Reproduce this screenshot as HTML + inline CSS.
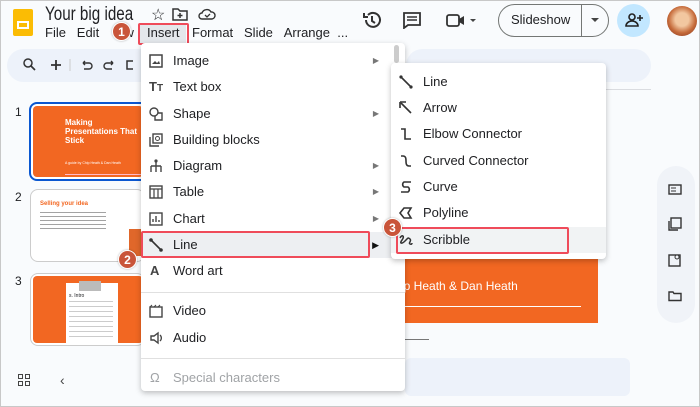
<!DOCTYPE html>
<html><head><style>
*{box-sizing:border-box;margin:0;padding:0}
body{width:700px;height:407px;overflow:hidden;background:#f9fbfd;font-family:"Liberation Sans",Roboto,sans-serif;color:#202124;position:relative;border:1px solid #c8c8c8}
.a{position:absolute}
.menu{background:#fff;border-radius:4px;box-shadow:0 2px 6px rgba(0,0,0,.25)}
.it{position:absolute;left:0;right:0;height:26px;font-size:13px;line-height:26px}
.it span.t{position:absolute;left:32px}
.it svg{position:absolute;left:8px;top:6px}
.arr{position:absolute;right:26px;font-size:8px;color:#777}
.badge{position:absolute;width:19px;height:19px;border-radius:50%;background:#c9553a;color:#fff;font-size:12px;font-weight:bold;text-align:center;line-height:19px;border:1.5px solid #fff;box-shadow:0 0 2px rgba(0,0,0,.3)}
.red{position:absolute;border:2.5px solid #ef4b5a;border-radius:2px}
</style></head><body>
<div class="a" style="left:12px;top:8px;width:20px;height:27px;background:#fbbc04;border-radius:2px"></div>
<div class="a" style="left:16px;top:20px;width:12px;height:8px;border:2px solid #fff"></div>
<div class="a" style="left:44px;top:3px;font-size:19px;transform:scaleX(0.8);transform-origin:left top;white-space:nowrap">Your big idea</div>
<div class="a" style="left:150px;top:4px;font-size:16px">☆</div>
<svg class="a" style="left:171px;top:6px" width="16" height="14"><path d="M1 2h5l2 2h7v9H1z" fill="none" stroke="#333" stroke-width="1.5"/><path d="M8 6v5M5.5 8.5h5" stroke="#333" stroke-width="1.5"/></svg>
<svg class="a" style="left:197px;top:6px" width="18" height="13"><path d="M4 12a3 3 0 0 1 0-6 5 5 0 0 1 9-1 3.5 3.5 0 0 1 1 7z" fill="none" stroke="#333" stroke-width="1.4"/><path d="M7 8l2 2 3-3" fill="none" stroke="#333" stroke-width="1.3"/></svg>
<div class="a" style="left:44px;top:24px;font-size:13px">File&nbsp;&nbsp;&nbsp;Edit&nbsp;&nbsp;&nbsp;&nbsp;&nbsp;&nbsp;&nbsp;w</div>
<div class="a" style="left:139px;top:24px;width:46px;height:18px;background:#e4e7eb"></div>
<div class="a" style="left:146px;top:24px;font-size:13px">Insert</div>
<div class="a" style="left:191px;top:24px;font-size:13px">Format&nbsp;&nbsp;&nbsp;Slide&nbsp;&nbsp;&nbsp;Arrange&nbsp;&nbsp;...</div>
<div class="red" style="left:137px;top:22px;width:51px;height:22px"></div>
<div class="badge" style="left:111px;top:21px">1</div>
<svg class="a" style="left:361px;top:9px" width="20" height="20"><path d="M4 10a7 7 0 1 0 2-5" fill="none" stroke="#333" stroke-width="2"/><path d="M2 3v4h4" fill="none" stroke="#333" stroke-width="2"/><path d="M10 6v5l3 2" fill="none" stroke="#333" stroke-width="2"/></svg>
<svg class="a" style="left:402px;top:11px" width="18" height="17"><path d="M1 1h16v12H5l-4 3z" fill="none" stroke="#333" stroke-width="1.8"/><path d="M4 5h10M4 8h10" stroke="#333" stroke-width="1.5"/></svg>
<svg class="a" style="left:445px;top:12px" width="30" height="15"><rect x="1" y="2" width="12" height="11" rx="2" fill="none" stroke="#333" stroke-width="1.8"/><path d="M13 6l5-3v9l-5-3z" fill="#333"/><path d="M24 6h6l-3 3z" fill="#444"/></svg>
<div class="a" style="left:497px;top:3px;width:111px;height:33px;border:1px solid #747775;border-radius:17px"></div>
<div class="a" style="left:510px;top:11px;font-size:13px">Slideshow</div>
<div class="a" style="left:580px;top:4px;width:1px;height:31px;background:#747775"></div>
<div class="a" style="left:590px;top:17px;border:4px solid transparent;border-top:4px solid #444"></div>
<div class="a" style="left:616px;top:3px;width:33px;height:33px;border-radius:50%;background:#c2e7ff"></div>
<svg class="a" style="left:624px;top:11px" width="18" height="16"><circle cx="7" cy="5" r="3" fill="none" stroke="#222" stroke-width="1.6"/><path d="M1 14a6 5 0 0 1 12 0z" fill="none" stroke="#222" stroke-width="1.6"/><path d="M15 3v6M12 6h6" stroke="#222" stroke-width="1.6"/></svg>
<div class="a" style="left:666px;top:5px;width:30px;height:30px;border-radius:50%;background:radial-gradient(circle at 50% 45%,#f2c7a0 30%,#c56a3a 60%,#7a2d1c)"></div>
<div class="a" style="left:6px;top:48px;width:243px;height:33px;background:#edf2fa;border-radius:17px"></div>
<div class="a" style="left:405px;top:48px;width:245px;height:33px;background:#edf2fa;border-radius:17px"></div>
<svg class="a" style="left:22px;top:57px" width="110" height="14"><circle cx="5" cy="5" r="4" fill="none" stroke="#333" stroke-width="1.5"/><path d="M8 8l4 4" stroke="#333" stroke-width="1.7"/><path d="M33 2v10M28 7h10" stroke="#333" stroke-width="1.8"/><path d="M47 1v12" stroke="#ccc"/><path d="M60 5h6a3 3 0 0 1 0 6h-5M60 5l2-2M60 5l2 2" fill="none" stroke="#333" stroke-width="1.4"/><path d="M90 5h-6a3 3 0 0 0 0 6h5M90 5l-2-2M90 5l-2 2" fill="none" stroke="#333" stroke-width="1.4"/><rect x="104" y="3" width="8" height="8" fill="none" stroke="#333" stroke-width="1.5"/></svg>
<div class="a" style="left:405px;top:88px;width:245px;height:1px;background:#dadce0"></div>
<div class="a" style="left:14px;top:104px;font-size:12px">1</div>
<div class="a" style="left:14px;top:189px;font-size:12px">2</div>
<div class="a" style="left:14px;top:273px;font-size:12px">3</div>
<div class="a" style="left:28px;top:101px;width:120px;height:79px;border:2.5px solid #0b57d0;border-radius:8px;background:#fff"></div>
<div class="a" style="left:32px;top:105px;width:110px;height:71px;background:#f26722;border-radius:4px"></div>
<div class="a" style="left:64px;top:117px;font-size:8px;font-weight:bold;color:#fff;line-height:9px">Making<br>Presentations That<br>Stick</div>
<div class="a" style="left:64px;top:160px;font-size:3.5px;color:#fff">A guide by Chip Heath &amp; Dan Heath</div>
<div class="a" style="left:64px;top:173px;width:76px;height:1px;background:#fbc"></div>
<div class="a" style="left:29px;top:188px;width:115px;height:73px;border:1px solid #ccc;border-radius:8px;background:#fff"></div>
<div class="a" style="left:39px;top:200px;font-size:6px;font-weight:bold;color:#f26722">Selling your idea</div>
<div class="a" style="left:39px;top:211px;width:66px;height:20px;background:repeating-linear-gradient(#666 0 1px,transparent 1px 4px);opacity:.6"></div>
<div class="a" style="left:128px;top:228px;width:12px;height:27px;background:#e0672a"></div>
<div class="a" style="left:29px;top:272px;width:115px;height:73px;border:1px solid #ccc;border-radius:8px;background:#fff"></div>
<div class="a" style="left:32px;top:275px;width:110px;height:67px;background:#f26722;border-radius:4px"></div>
<div class="a" style="left:65px;top:282px;width:52px;height:60px;background:#fff"></div>
<div class="a" style="left:78px;top:280px;width:22px;height:10px;background:#bbb"></div>
<div class="a" style="left:68px;top:292px;font-size:5px">s. Intro</div>
<div class="a" style="left:68px;top:300px;width:44px;height:38px;background:repeating-linear-gradient(#999 0 1px,transparent 1px 5px);opacity:.5"></div>
<svg class="a" style="left:17px;top:373px" width="12" height="12"><rect x="0.5" y="0.5" width="4" height="4" fill="none" stroke="#444"/><rect x="7.5" y="0.5" width="4" height="4" fill="none" stroke="#444"/><rect x="0.5" y="7.5" width="4" height="4" fill="none" stroke="#444"/><rect x="7.5" y="7.5" width="4" height="4" fill="none" stroke="#444"/></svg>
<div class="a" style="left:59px;top:371px;font-size:14px;color:#444">‹</div>
<div class="a" style="left:390px;top:258px;width:207px;height:64px;background:#f26722"></div>
<div class="a" style="left:400px;top:278px;font-size:12px;color:#fff">ip Heath &amp; Dan Heath</div>
<div class="a" style="left:400px;top:305px;width:180px;height:1px;background:#fff"></div>
<div class="a" style="left:404px;top:338px;width:24px;height:1px;background:#777"></div>
<div class="a" style="left:404px;top:357px;width:225px;height:38px;background:#edf2fa;border-radius:6px"></div>
<div class="a" style="left:656px;top:165px;width:38px;height:157px;background:#f0f3f8;border-radius:19px"></div>
<svg class="a" style="left:667px;top:181px" width="14" height="130"><rect x="1" y="3" width="12" height="9" fill="none" stroke="#333" stroke-width="1.4"/><path d="M3 6h5M3 9h5" stroke="#333"/><rect x="3" y="36" width="10" height="10" fill="none" stroke="#333" stroke-width="1.4"/><path d="M1 39v9h9" fill="none" stroke="#333" stroke-width="1.4"/><rect x="1" y="73" width="11" height="11" fill="none" stroke="#333" stroke-width="1.4"/><circle cx="9" cy="75" r="2" fill="#f0f3f8" stroke="#333"/><path d="M1 110h4l1 1.5h7v7H1z" fill="none" stroke="#333" stroke-width="1.4"/></svg>
<div class="a menu" style="left:140px;top:42px;width:264px;height:348px">
<div class="a" style="left:253px;top:2px;width:5px;height:18px;background:#ccc;border-radius:3px"></div>
<div class="it" style="top:5px"><svg width="14" height="14"><rect x="1" y="1" width="12" height="12" fill="none" stroke="#444" stroke-width="1.5"/><path d="M3 10l3-3 2 2 2-2 1 3z" fill="#444"/></svg><span class="t">Image</span><span class="arr">▶</span></div>
<div class="it" style="top:31px"><span style="position:absolute;left:8px;font-weight:bold;font-size:13px;color:#444">T<small style="font-size:10px">T</small></span><span class="t">Text box</span></div>
<div class="it" style="top:58px"><svg width="14" height="14"><circle cx="5" cy="5" r="4" fill="none" stroke="#444" stroke-width="1.4"/><path d="M9 6h4v7H6V9" fill="none" stroke="#444" stroke-width="1.4"/></svg><span class="t">Shape</span><span class="arr">▶</span></div>
<div class="it" style="top:84px"><svg width="14" height="14"><rect x="4" y="1" width="9" height="9" fill="none" stroke="#444" stroke-width="1.4"/><circle cx="8.5" cy="5.5" r="2" fill="none" stroke="#444"/><path d="M1 4v9h9" fill="none" stroke="#444" stroke-width="1.4"/></svg><span class="t">Building blocks</span></div>
<div class="it" style="top:110px"><svg width="14" height="14"><circle cx="7" cy="2" r="1.6" fill="#444"/><path d="M7 3v4M2 7h10M2 7v6M7 7v6M12 7v6" stroke="#444" stroke-width="1.4"/></svg><span class="t">Diagram</span><span class="arr">▶</span></div>
<div class="it" style="top:136px"><svg width="14" height="14"><rect x="1" y="1" width="12" height="12" fill="none" stroke="#444" stroke-width="1.4"/><path d="M1 4h12M5 4v9M9 4v9" stroke="#444" stroke-width="1.2"/></svg><span class="t">Table</span><span class="arr">▶</span></div>
<div class="it" style="top:163px"><svg width="14" height="14"><rect x="1" y="1" width="12" height="12" fill="none" stroke="#444" stroke-width="1.4"/><path d="M4 10V7M7 10V4M10 10V8" stroke="#444" stroke-width="1.4"/></svg><span class="t">Chart</span><span class="arr">▶</span></div>
<div class="it" style="top:189px;background:#edeff2"><svg width="14" height="14"><path d="M2 2l10 10" stroke="#333" stroke-width="1.6"/><circle cx="2" cy="2" r="1.8" fill="#333"/><circle cx="12" cy="12" r="1.8" fill="#333"/></svg><span class="t">Line</span><span class="arr" style="color:#111;font-size:9px">▶</span></div>
<div class="it" style="top:215px"><span style="position:absolute;left:9px;font-weight:bold;color:#444">A</span><span class="t">Word art</span></div>
<div class="a" style="left:0;right:0;top:249px;height:1px;background:#e0e0e0"></div>
<div class="it" style="top:255px"><svg width="14" height="14"><rect x="1" y="3" width="12" height="10" fill="none" stroke="#444" stroke-width="1.4"/><path d="M1 3l2-2M5 3l2-2M9 3l2-2" stroke="#444"/></svg><span class="t">Video</span></div>
<div class="it" style="top:282px"><svg width="14" height="14"><path d="M2 5h3l4-3v10L5 9H2z" fill="none" stroke="#444" stroke-width="1.4"/><path d="M11 4a4 4 0 0 1 0 6" fill="none" stroke="#444" stroke-width="1.3"/></svg><span class="t">Audio</span></div>
<div class="a" style="left:0;right:0;top:315px;height:1px;background:#e0e0e0"></div>
<div class="it" style="top:322px;color:#a0a3a6"><span style="position:absolute;left:9px">Ω</span><span class="t">Special characters</span></div>
</div>
<div class="red" style="left:140px;top:230px;width:229px;height:27px"></div>
<div class="badge" style="left:117px;top:249px">2</div>
<div class="a menu" style="left:390px;top:62px;width:215px;height:196px">
<div class="it" style="top:6px"><svg width="14" height="14"><path d="M2 2l10 10" stroke="#333" stroke-width="1.6"/><circle cx="2" cy="2" r="1.6" fill="#333"/><circle cx="12" cy="12" r="1.6" fill="#333"/></svg><span class="t">Line</span></div>
<div class="it" style="top:32px"><svg width="14" height="14"><path d="M2 2l10 10" stroke="#333" stroke-width="1.6"/><path d="M1 1h6M1 1v6" stroke="#333" stroke-width="1.6"/></svg><span class="t">Arrow</span></div>
<div class="it" style="top:58px"><svg width="14" height="14"><path d="M2 2h4v10h6" fill="none" stroke="#333" stroke-width="1.6"/></svg><span class="t">Elbow Connector</span></div>
<div class="it" style="top:85px"><svg width="14" height="14"><path d="M2 2h2c3 0 3 3 3 5s0 5 3 5h2" fill="none" stroke="#333" stroke-width="1.6"/></svg><span class="t">Curved Connector</span></div>
<div class="it" style="top:111px"><svg width="14" height="14"><path d="M12 2H5a3 3 0 0 0 0 5h4a3 3 0 0 1 0 5H2" fill="none" stroke="#333" stroke-width="1.6"/></svg><span class="t">Curve</span></div>
<div class="it" style="top:137px"><svg width="14" height="14"><path d="M12 2H5L1 7l4 5h7l-3-5z" fill="none" stroke="#333" stroke-width="1.6"/></svg><span class="t">Polyline</span></div>
<div class="it" style="top:164px;background:#f1f3f4"><svg width="14" height="14"><path d="M1 5c2-4 5-2 2 2s0 4 3 1 3-4 5-2-2 4 0 5 2-1 2-1" fill="none" stroke="#333" stroke-width="1.5"/></svg><span class="t">Scribble</span></div>
</div>
<div class="red" style="left:395px;top:226px;width:173px;height:27px"></div>
<div class="badge" style="left:382px;top:217px">3</div>
</body></html>
